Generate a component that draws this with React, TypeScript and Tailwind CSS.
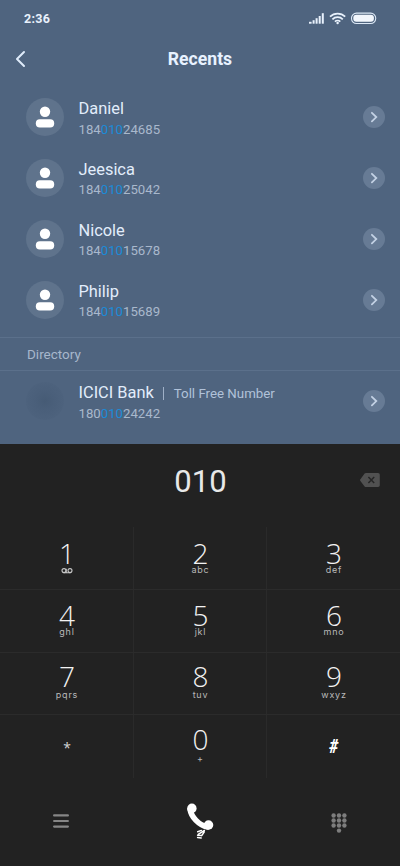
import React from 'react';

interface Contact {
  name: string;
  prefix: string;
  suffix: string;
  note?: string;
}

interface DialKey {
  digit: string;
  letters: string;
}

interface DialRow {
  padding: string;
  labelGap: string;
  keys: DialKey[];
}

const MATCH = '010';

const contacts: Contact[] = [
  { name: 'Daniel', prefix: '184', suffix: '24685' },
  { name: 'Jeesica', prefix: '184', suffix: '25042' },
  { name: 'Nicole', prefix: '184', suffix: '15678' },
  { name: 'Philip', prefix: '184', suffix: '15689' },
];

const directoryEntry: Contact = { name: 'ICICI Bank', prefix: '180', suffix: '24242', note: 'Toll Free Number' };

const dialRows: DialRow[] = [
  {
    padding: 'pt-[16px]',
    labelGap: 'mt-0',
    keys: [
      { digit: '1', letters: 'voicemail' },
      { digit: '2', letters: 'abc' },
      { digit: '3', letters: 'def' },
    ],
  },
  {
    padding: 'pt-[15.5px]',
    labelGap: 'mt-0',
    keys: [
      { digit: '4', letters: 'ghl' },
      { digit: '5', letters: 'jkl' },
      { digit: '6', letters: 'mno' },
    ],
  },
  {
    padding: 'pt-[13.5px]',
    labelGap: 'mt-[1.5px]',
    keys: [
      { digit: '7', letters: 'pqrs' },
      { digit: '8', letters: 'tuv' },
      { digit: '9', letters: 'wxyz' },
    ],
  },
  {
    padding: 'pt-[13.5px]',
    labelGap: 'mt-[3px]',
    keys: [
      { digit: '*', letters: '' },
      { digit: '0', letters: '+' },
      { digit: '#', letters: '' },
    ],
  },
];

const StatusIcons: React.FC = () => (
  <svg className="w-[70px] h-[14px]" viewBox="0 0 70 14" fill="none">
    <g fill="#e8f1fc">
      <rect x="1" y="9.8" width="2.6" height="1.9" />
      <rect x="4.6" y="8.2" width="2" height="3.5" />
      <rect x="7.6" y="6.2" width="2" height="5.5" />
      <rect x="10.7" y="4" width="2" height="7.7" />
      <rect x="13.8" y="1.2" width="2" height="10.5" />
    </g>
    <g stroke="#e8f1fc" strokeWidth="1.7">
      <path d="M22 4.7a10.8 10.8 0 0 1 15.2 0" />
      <path d="M24.4 7.3a7.3 7.3 0 0 1 10.4 0" />
      <path d="M26.9 9.6a3.9 3.9 0 0 1 5.4 0" />
    </g>
    <circle cx="29.6" cy="11" r="1.2" fill="#e8f1fc" />
    <rect x="43.5" y="1.1" width="24.2" height="10.4" rx="5" stroke="#dbe7f5" strokeWidth="1.1" />
    <rect x="45.3" y="2.8" width="20.6" height="7" rx="3" fill="#f2f6fc" />
  </svg>
);

const PersonIcon: React.FC = () => (
  <svg className="w-[38px] h-[38px]" viewBox="0 0 38 38" fill="#fff">
    <circle cx="19" cy="13.8" r="5.2" />
    <rect x="9.8" y="21.2" width="18.4" height="8.2" rx="4" />
  </svg>
);

const ArrowBadge: React.FC = () => (
  <span className="w-[22px] h-[22px] rounded-full bg-[#677b95] flex-shrink-0">
    <svg className="w-[22px] h-[22px]" viewBox="0 0 22 22" fill="none" stroke="#c3d1e4" strokeWidth="1.8" strokeLinecap="round">
      <path d="M8.9 6.8l4.4 4.3-4.4 4.3" />
    </svg>
  </span>
);

const VoicemailIcon: React.FC = () => (
  <svg className="w-[12px] h-[7px]" viewBox="0 0 12 7" fill="none" stroke="#c8c8c8" strokeWidth="1.1">
    <circle cx="3" cy="3.6" r="2" />
    <circle cx="9" cy="3.6" r="2" />
    <path d="M2.5 5.7h7M5.2 1.7v4" />
  </svg>
);

const BackspaceIcon: React.FC = () => (
  <svg className="w-[20px] h-[14px] -mt-[5px]" viewBox="0 0 20 14">
    <path d="M6 0h12a1.8 1.8 0 0 1 1.8 1.8v10.4A1.8 1.8 0 0 1 18 14H6a2 2 0 0 1-1.4-.6L.6 8.2a1.6 1.6 0 0 1 0-2.3L4.6.6A2 2 0 0 1 6 0z" fill="#515151" />
    <path d="M8.4 3.9l5.8 6.2M14.2 3.9l-5.8 6.2" stroke="#262626" strokeWidth="1.5" />
  </svg>
);

const CallIcon: React.FC = () => (
  <svg className="w-[30px] h-[38px]" viewBox="0 0 30 38">
    <path d="M5.1 7.5C6.3 15 13.800 23.300 22.500 25" fill="none" stroke="#fff" strokeWidth="5.6" strokeLinecap="round" />
    <ellipse cx="6.900" cy="6.400" rx="4.700" ry="4.800" fill="#fff" />
    <ellipse cx="23.500" cy="23" rx="4.800" ry="4.700" fill="#fff" />
    <g fill="none" stroke="#fff" strokeWidth="1.5" strokeLinecap="round">
      <path d="M12.7 29.8l3.700-1.400M13.200 32.300l6.200-3.800M12.600 33.200l3.800.2M19.300 29.900l-2.600 3.800M12.600 35.500l3.600.5" />
    </g>
  </svg>
);

const MenuIcon: React.FC = () => (
  <svg className="w-[16px] h-[16px]" viewBox="0 0 16 16" stroke="#868686" strokeWidth="2.2" strokeLinecap="round">
    <path d="M1.1 2.400h13.800M1.100 8h13.800M1.100 13.600h13.800" />
  </svg>
);

const KeypadIcon: React.FC = () => (
  <svg className="w-[16px] h-[20px] mt-[3px]" viewBox="0 0 16 20" fill="#7e7e7e">
    {[2.6, 8, 13.4].map((x) => [2.5, 7.5, 12.5].map((y) => <circle key={`${x}-${y}`} cx={x} cy={y} r="2.2" />))}
    <circle cx="8" cy="17.6" r="2.2" />
  </svg>
);

const ContactRow: React.FC<{ contact: Contact; dim?: boolean }> = ({ contact, dim }) => (
  <div className="h-[60.8px] pl-[26px] pr-[15px] flex items-center">
    {dim ? (
      <span className="w-[38px] h-[38px] rounded-full bg-[radial-gradient(circle,#465b75_0%,#4a5f7a_35%,#4d627d_70%)]" />
    ) : (
      <span className="w-[38px] h-[38px] rounded-full bg-[#5f738c]">
        <PersonIcon />
      </span>
    )}
    <div className="ml-[14.5px] pt-[4.6px] flex-1">
      <div className="flex items-center h-[20px] text-[16.4px] text-[#e2edfb]">
        {contact.name}
        {contact.note && (
          <>
            <span className="w-px h-[13px] ml-[9px] mr-[10px] bg-[#9fb0c7]" />
            <span className="text-[13.3px] text-[#b1c2d9]">{contact.note}</span>
          </>
        )}
      </div>
      <div className="h-[20px] leading-[20px] text-[13.2px] text-[#a9b8cc]">
        {contact.prefix}
        <span className="text-[#1b8bd8]">{MATCH}</span>
        {contact.suffix}
      </div>
    </div>
    <ArrowBadge />
  </div>
);

const Key: React.FC<{ item: DialKey; row: DialRow }> = ({ item, row }) => {
  if (item.digit === '*') {
    return <div className="flex items-center justify-center pt-[2px] pl-px text-[14px] text-[#d5d5d5] font-['Open_Sans',sans-serif]">*</div>;
  }
  if (item.digit === '#') {
    return (
      <div className="flex items-center justify-center pb-[2px] text-[20px] font-black italic text-white">
        <span className="scale-x-80">#</span>
      </div>
    );
  }
  return (
    <div className={`flex flex-col items-center pl-px ${row.padding}`}>
      <span className="h-[21px] leading-[21px] text-[28px] font-light text-[#f2f2f2] font-['Open_Sans',sans-serif]">{item.digit}</span>
      <span className={`h-[12px] flex items-center leading-[12px] text-[9px] tracking-[0.8px] text-[#b9b9b9] font-[Inter,sans-serif] ${row.labelGap}`}>
        {item.letters === 'voicemail' ? <VoicemailIcon /> : item.letters}
      </span>
    </div>
  );
};

const App: React.FC = () => {
  return (
    <div className="w-[400px] h-[866px] flex flex-col overflow-hidden bg-[#222222] font-[Roboto,sans-serif]">
      <div className="h-[444px] flex-shrink-0 bg-[#4f647f]">
        <div className="h-[37px] pl-[24px] pr-[22px] flex items-center justify-between">
          <span className="pt-px text-[12.5px] font-bold tracking-[0.3px] text-[#e8f1fc]">2:36</span>
          <StatusIcons />
        </div>
        <div className="h-[50px] px-[15px] pb-[7px] flex items-center">
          <svg className="w-[11px] h-[18px]" viewBox="0 0 11 18" fill="none" stroke="#dfebfa" strokeWidth="2" strokeLinecap="round" strokeLinejoin="round">
            <path d="M9 2L2 9l7 7" />
          </svg>
          <h1 className="flex-1 pt-px pr-[11px] text-center text-[17.6px] font-bold text-[#e8f2ff]">Recents</h1>
        </div>

        {contacts.map((contact) => (
          <ContactRow key={contact.name} contact={contact} />
        ))}

        <div className="mt-[6.8px] h-[34px] pl-[27px] flex items-center border-y border-[#5b708b] text-[13.5px] text-[#a7b7cc]">
          Directory
        </div>
        <ContactRow contact={directoryEntry} dim />
      </div>

      <div className="h-[83px] flex-shrink-0 pl-[41px] pr-[20px] pb-[6px] flex items-center">
        <span className="flex-1 text-center text-[31px] text-[#e8e8e8]">{MATCH}</span>
        <BackspaceIcon />
      </div>

      <div className="flex-shrink-0 flex flex-col">
        {dialRows.map((row, index) => (
          <div
            key={index}
            className="h-[62.8px] grid grid-cols-[133px_134px_133px] border-b border-[#2b2b2b] last:border-b-0"
          >
            {row.keys.map((item, col) => (
              <div key={item.digit} className={col === 1 ? 'grid border-x border-[#2a2a2a]' : 'grid'}>
                <Key item={item} row={row} />
              </div>
            ))}
          </div>
        ))}
      </div>

      <div className="flex-1 px-[53px] pb-[2px] flex items-center justify-between">
        <MenuIcon />
        <CallIcon />
        <KeypadIcon />
      </div>
    </div>
  );
};

export default App;
